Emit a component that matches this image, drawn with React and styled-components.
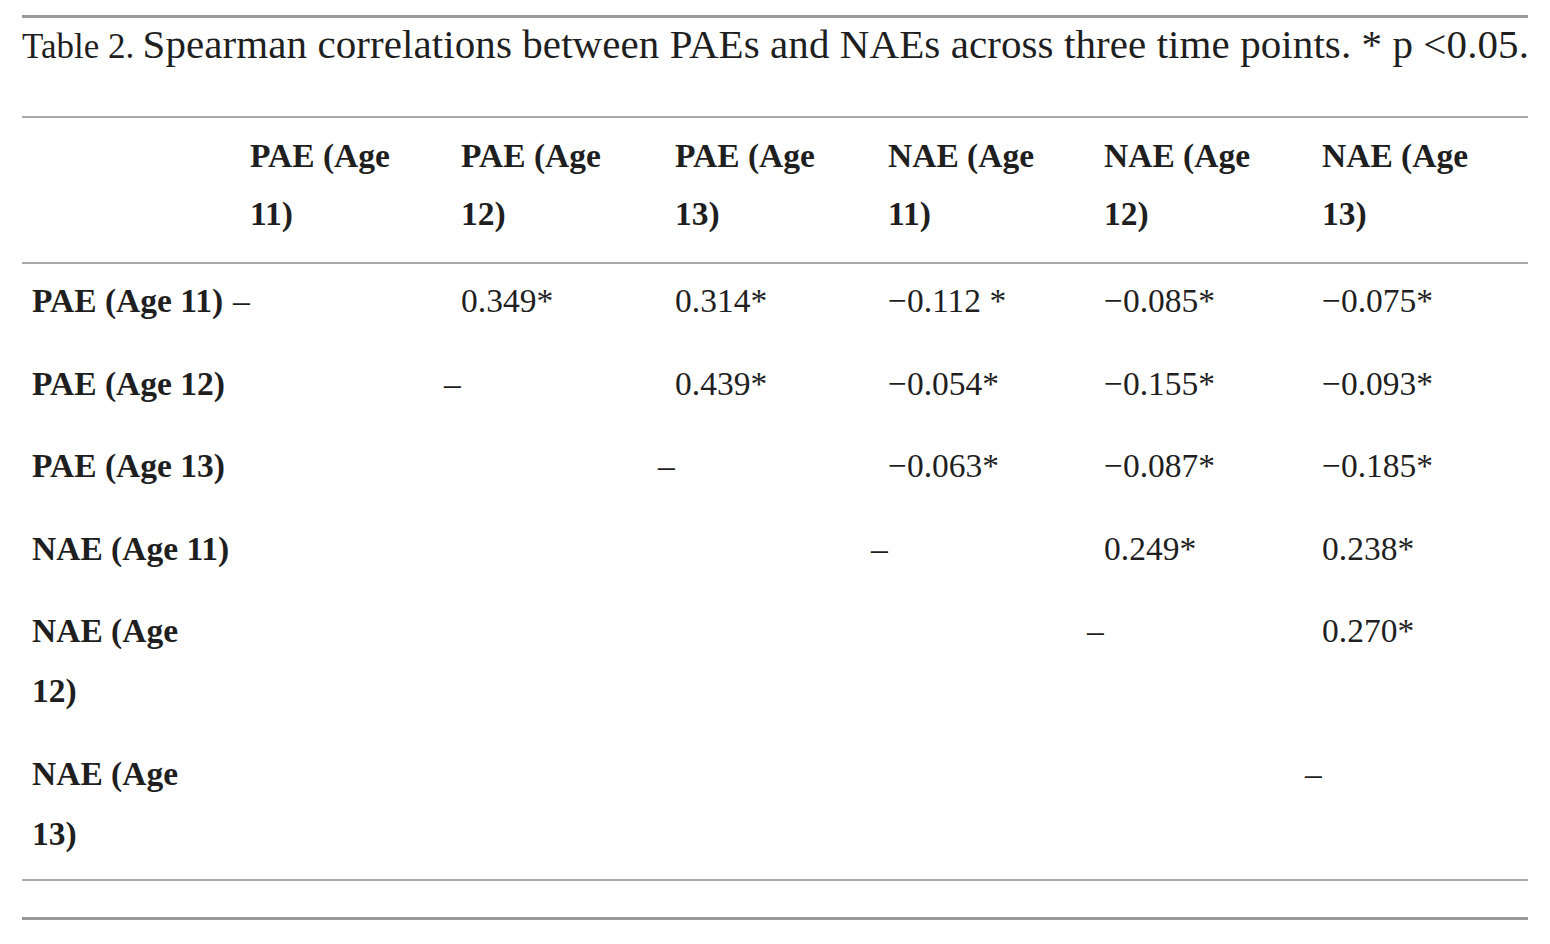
import styled, { createGlobalStyle } from 'styled-components';

const GlobalStyle = createGlobalStyle`
    body {
        margin: 0;
        background: #fff;
        font-family: "Liberation Serif", "Times New Roman", serif;
        color: #1f1f1f;
    }
`;

const Figure = styled.div`
    width: 1506px;
    margin-left: 22px;
    padding-top: 15px;
`;

const Rule = styled.div`
    height: ${(p) => p.thick ? '3px' : '2px'};
    background: ${(p) => p.thick ? '#999' : '#a9a9a9'};
`;

const Caption = styled.p`
    margin: 2px 0 48px 0;
    height: 48px;
    font-size: 41px;
    line-height: 48px;
    letter-spacing: 0.08px;
    white-space: nowrap;
`;

const Label = styled.span`
    font-size: 35px;
    line-height: 1;
    letter-spacing: 0;
    margin-right: -2px;
`;

const Table = styled.table`
    width: 100%;
    border-collapse: collapse;
    table-layout: fixed;
    font-size: 33.5px;
    line-height: 60px;
`;

const HeadRow = styled.tr`
    border-bottom: 2px solid #a9a9a9;
`;

const HeadCell = styled.th`
    text-align: left;
    font-weight: bold;
    vertical-align: top;
    padding: 9px 10px 19px 10px;
    line-height: 58px;
`;

const Line = styled.span`
    display: block;
    white-space: nowrap;
`;

const RowHead = styled.th`
    text-align: left;
    font-weight: bold;
    vertical-align: top;
    padding: 7px 0 15.5px 10px;
    white-space: nowrap;
`;

const Cell = styled.td`
    vertical-align: top;
    padding: 7px 10px 15.5px 10px;
    white-space: nowrap;
`;

const Dash = styled.span`
    display: inline-block;
    margin-left: -17px;
`;

const Body = styled.tbody`
    border-bottom: 2px solid #a9a9a9;
`;

const Spacer = styled.div`
    height: 36px;
`;

const widths = [218, 211, 214, 213, 216, 218, 216];
const cols = ['PAE', 'PAE', 'PAE', 'NAE', 'NAE', 'NAE'].map((k, i) => [`${k} (Age`, `${11 + (i % 3)})`]);

const rows = [
    { name: ['PAE (Age 11)'], values: ['–', '0.349*', '0.314*', '−0.112 *', '−0.085*', '−0.075*'] },
    { name: ['PAE (Age 12)'], values: ['', '–', '0.439*', '−0.054*', '−0.155*', '−0.093*'] },
    { name: ['PAE (Age 13)'], values: ['', '', '–', '−0.063*', '−0.087*', '−0.185*'] },
    { name: ['NAE (Age 11)'], values: ['', '', '', '–', '0.249*', '0.238*'] },
    { name: ['NAE (Age', '12)'], values: ['', '', '', '', '–', '0.270*'] },
    { name: ['NAE (Age', '13)'], values: ['', '', '', '', '', '–'] },
];

export default function App() {
    return (
        <Figure>
            <GlobalStyle />
            <Rule thick />
            <Caption>
                <Label>Table 2.</Label> Spearman correlations between PAEs and NAEs across three time points. * p &lt;0.05.
            </Caption>
            <Rule />
            <Table>
                <colgroup>
                    {widths.map((w, i) => <col key={i} style={{ width: w }} />)}
                </colgroup>
                <thead>
                    <HeadRow>
                        <HeadCell />
                        {cols.map((c, i) => (
                            <HeadCell key={i}>
                                <Line>{c[0]}</Line>
                                <Line>{c[1]}</Line>
                            </HeadCell>
                        ))}
                    </HeadRow>
                </thead>
                <Body>
                    {rows.map((r, ri) => (
                        <tr key={ri}>
                            <RowHead>
                                {r.name.map((n) => <Line key={n}>{n}</Line>)}
                            </RowHead>
                            {r.values.map((v, i) => (
                                <Cell key={i}>{v === '–' ? <Dash>–</Dash> : v}</Cell>
                            ))}
                        </tr>
                    ))}
                </Body>
            </Table>
            <Spacer />
            <Rule thick />
        </Figure>
    );
}
